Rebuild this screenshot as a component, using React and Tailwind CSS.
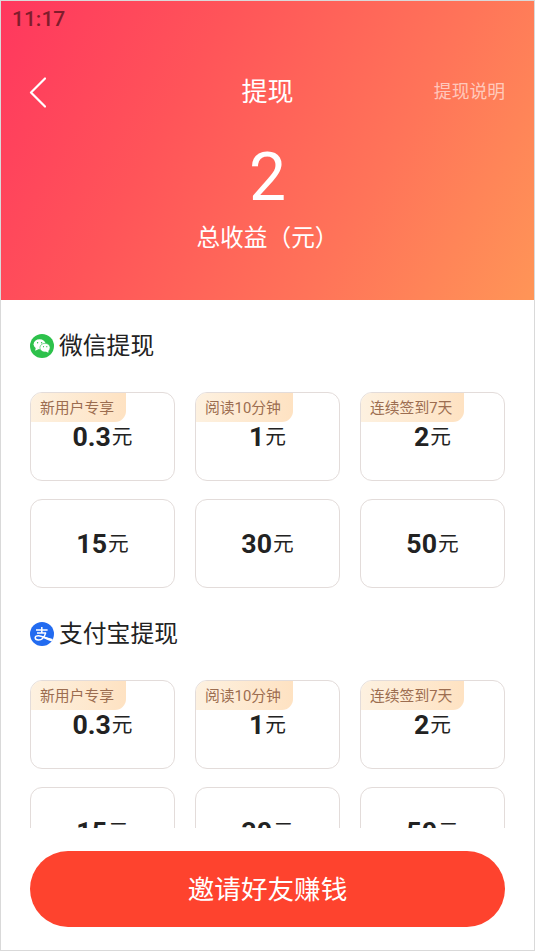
const amounts = [
  { value: "0.3", tag: "新用户专享" },
  { value: "1", tag: "阅读10分钟" },
  { value: "2", tag: "连续签到7天" },
  { value: "15" },
  { value: "30" },
  { value: "50" },
];

const AmountCard = ({ value, tag }) => (
  <button
    type="button"
    className="relative h-[89px] rounded-[12px] border border-[#e3dcda] bg-white overflow-hidden flex items-center justify-center text-[#222]"
  >
    {tag && (
      <span className="absolute left-0 top-0 h-[29px] pl-[9px] pr-[12px] pt-[2px] flex items-center rounded-br-[11px] bg-linear-to-r from-[#fdf1e0] to-[#fee2c2] text-[14.8px] leading-none text-[#9c6d50] whitespace-nowrap">
        {tag}
      </span>
    )}
    <span className="flex items-baseline leading-none pt-[2px]">
      <span className="text-[26.7px] font-bold">{value}</span>
      <span className="text-[20.7px] ml-px -translate-y-[2px]">元</span>
    </span>
  </button>
);

const Section = ({ icon, title }) => (
  <section className="pt-[30px]">
    <div className="flex items-center h-[30px] gap-[6px]">
      {icon}
      <h2 className="text-[23.8px] leading-none text-[#222] pt-[3px]">{title}</h2>
    </div>
    <div className="grid grid-cols-3 gap-x-5 gap-y-[18px] mt-8">
      {amounts.map((item) => (
        <AmountCard key={item.value} value={item.value} tag={item.tag} />
      ))}
    </div>
  </section>
);

const WechatIcon = () => (
  <svg className="w-6 h-6 mt-px -ml-[0.5px] -mr-[0.5px]" viewBox="0 0 24 24">
    <circle cx="12" cy="12" r="12" fill="#2dc14b" />
    <path d="M5.2 16.8 5.8 13.6 9 15z" fill="#fff" />
    <ellipse cx="9.6" cy="10.2" rx="6" ry="5" fill="#fff" />
    <ellipse cx="15" cy="13.7" rx="5.1" ry="4.4" fill="#fff" stroke="#2dc14b" strokeWidth="0.6" />
    <path d="M18.3 18.8 15.8 17.5 18.5 15.8z" fill="#fff" />
    <g fill="#2dc14b">
      <circle cx="7.6" cy="8.8" r="0.7" />
      <circle cx="11.6" cy="8.8" r="0.7" />
      <circle cx="13.5" cy="12.7" r="0.6" />
      <circle cx="16.8" cy="12.7" r="0.6" />
    </g>
  </svg>
);

const AlipayIcon = () => (
  <svg className="w-6 h-6 mt-px -ml-[0.5px] -mr-[0.5px]" viewBox="0 0 24 24" fill="none">
    <circle cx="12" cy="12" r="12" fill="#226bf0" />
    <g stroke="#fff" strokeWidth="1.5">
      <path d="M6 8h11.6M11.8 5v6M7 11h8.8" />
      <path d="M15.8 10.6c-1.1 3.6-3.6 7.4-7.3 7.4-2 0-3.3-.8-3.3-2.2 0-1.4 1.5-2.2 3.4-2.1 3.2.1 6.8 2.5 13.6 4.5" />
    </g>
    <path d="M12.6 14.1c3 1.1 6.2 2.2 10.2 3l-1.4 2.2c-3.3-.8-6.7-2.4-10-4.2z" fill="#fff" />
  </svg>
);

const App = () => {
  return (
    <div className="w-[535px] h-[951px] border border-[#d9d9d9] bg-white overflow-hidden flex flex-col font-['Roboto','Noto_Sans_CJK_SC',sans-serif]">
      {/* header */}
      <header className="h-[299px] shrink-0 bg-[linear-gradient(119deg,#ff375e_0%,#ff5459_33%,#ff7459_68%,#ff9557_100%)] text-white flex flex-col">
        <div className="h-[35px] pl-[11px] pt-[7px] text-[21px] leading-[22px] font-medium text-[#801c2c]">
          11:17
        </div>
        <div className="h-[112px] px-[29px] grid grid-cols-3 items-center">
          <svg className="w-[17px] h-[31px] -ml-px" viewBox="0 0 17 31" fill="none" stroke="currentColor" strokeWidth="2.2">
            <path d="M16 1.5 2 15.5 16 29.5" strokeLinecap="round" strokeLinejoin="round" />
          </svg>
          <h1 className="text-[26px] leading-none text-center">提现</h1>
          <span className="text-[17.8px] leading-none text-right text-white/60">提现说明</span>
        </div>
        <div className="text-[66px] leading-[60px] text-center">2</div>
        <div className="mt-[18px] text-[23.7px] leading-[24px] text-center">总收益（元）</div>
      </header>

      {/* withdraw options */}
      <main className="h-[528px] shrink-0 overflow-hidden px-[29px]">
        <Section icon={<WechatIcon />} title="微信提现" />
        <Section icon={<AlipayIcon />} title="支付宝提现" />
      </main>

      <footer className="px-[29px] pt-[23px]">
        <button
          type="button"
          className="w-full h-[76px] pt-[2px] rounded-full bg-[#fe432e] text-white text-[26.6px] leading-none"
        >
          邀请好友赚钱
        </button>
      </footer>
    </div>
  );
};

export default App;
